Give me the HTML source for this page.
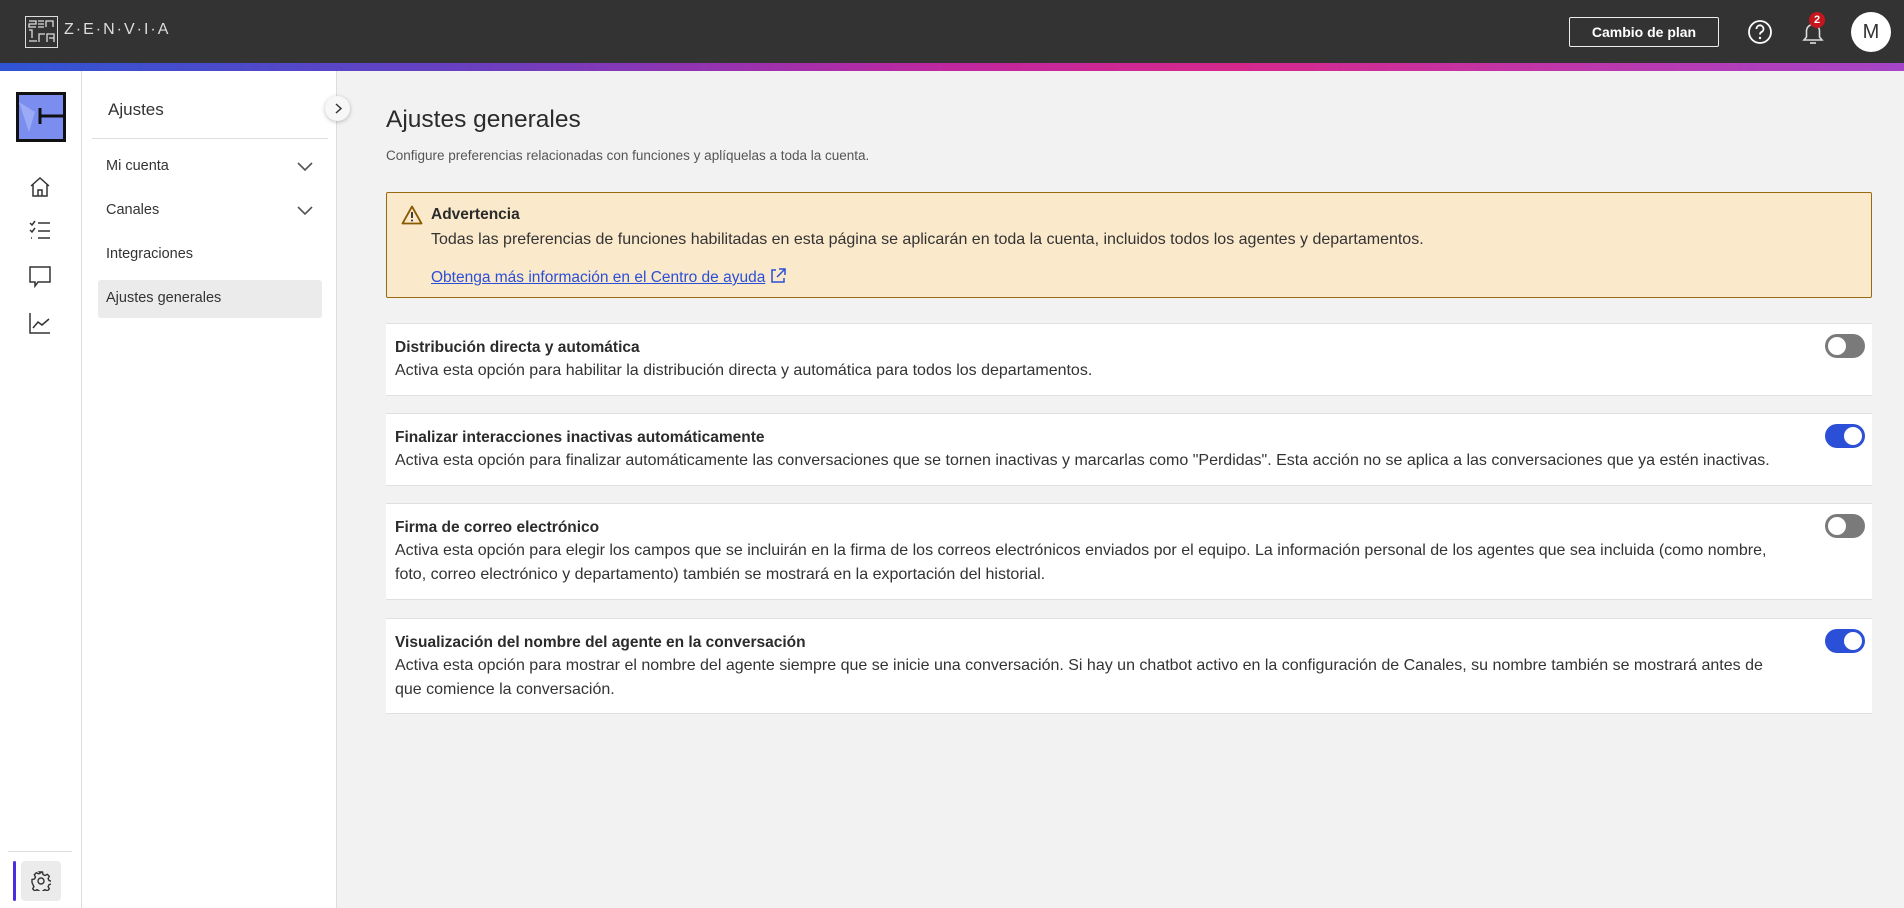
<!DOCTYPE html>
<html><head><meta charset="utf-8"><style>
*{box-sizing:border-box;margin:0;padding:0}
body{width:1904px;height:908px;overflow:hidden;font-family:"Liberation Sans",sans-serif;background:#f2f2f2;position:relative;color:#2b2b2b}
.hdr{position:absolute;left:0;top:0;width:1904px;height:63px;background:#333}
.grad{position:absolute;left:0;top:63px;width:1904px;height:8px;background:linear-gradient(90deg,#2f55d4 0%,#6a3fc0 25%,#c0279f 50%,#d6288c 65%,#a545c8 100%)}
.rail{position:absolute;left:0;top:71px;width:82px;height:837px;background:#fff;border-right:1px solid #ddd}
.panel{position:absolute;left:82px;top:71px;width:255px;height:837px;background:#fff;border-right:1px solid #ddd}
.abs{position:absolute}
.card{position:absolute;left:386px;width:1486px;background:#fff;border-top:1px solid #e0e0e0;border-bottom:1px solid #e0e0e0;padding:13px 0 0 9px}
.card h3{font-size:15.5px;font-weight:bold;line-height:22px;color:#2b2b2b}
.card p{font-size:16px;line-height:24px;color:#333;width:1400px}
.tg{position:absolute;right:7px;top:10px;width:40px;height:24px;border-radius:12px;background:#7a7a7a}
.tg::after{content:"";position:absolute;left:3px;top:3px;width:18px;height:18px;border-radius:50%;background:#fff}
.tg.on{background:#2b4fd6}.tg.on::after{left:19px}
.mi{position:absolute;left:106px;font-size:14.5px;color:#333}
</style></head><body>
<div class="hdr">
 <svg class="abs" style="left:25px;top:16px" width="33" height="32" viewBox="0 0 33 32"><rect x="0.5" y="0.5" width="32" height="31" fill="none" stroke="#ddd"/><path d="M4 5h7v3H4v3h7M13 5h6M13 8h6M13 11h6M21 11V5h7v6M4 14h3v8M4 25h8M14 26v-8h6M22 26v-8h7v8M24 22h5" fill="none" stroke="#ddd" stroke-width="1.3"/></svg>
 <div class="abs" style="left:64px;top:21px;color:#ddd;font-size:16px;letter-spacing:2px">Z·E·N·V·I·A</div>
 <div class="abs" style="left:1569px;top:17px;width:150px;height:30px;border:1px solid #eee;border-radius:2px;color:#fff;font-weight:bold;font-size:14px;text-align:center;line-height:28px">Cambio de plan</div>
 <svg class="abs" style="left:1747px;top:19px" width="26" height="26" viewBox="0 0 26 26"><circle cx="13" cy="13" r="11" fill="none" stroke="#fff" stroke-width="1.8"/><path d="M9.5 10a3.5 3.5 0 1 1 5 3c-1.2.6-1.5 1.3-1.5 2.5" fill="none" stroke="#fff" stroke-width="1.8"/><circle cx="13" cy="19" r="1.2" fill="#fff"/></svg>
 <svg class="abs" style="left:1799px;top:18px" width="28" height="30" viewBox="0 0 28 30"><path d="M5 22h18l-2.5-3v-6a6.5 6.5 0 0 0-13 0v6z" fill="none" stroke="#ddd" stroke-width="1.6"/><path d="M11 25h6" stroke="#ddd" stroke-width="1.6"/></svg>
 <div class="abs" style="left:1809px;top:12px;width:16px;height:16px;border-radius:50%;background:#c4161c;color:#fff;font-size:11px;font-weight:bold;text-align:center;line-height:16px">2</div>
 <div class="abs" style="left:1851px;top:12px;width:40px;height:40px;border-radius:50%;background:#fff;color:#333;font-size:20px;text-align:center;line-height:40px">M</div>
</div>
<div class="grad"></div>
<div class="rail">
 <svg class="abs" style="left:16px;top:21px" width="50" height="50" viewBox="0 0 50 50"><rect x="1.5" y="1.5" width="47" height="47" fill="#7b8ef0" stroke="#111" stroke-width="3"/><path d="M3 10l10 30 6-20z" fill="#aab6f7" opacity=".7"/><path d="M24 24h24M24 16v16" stroke="#111" stroke-width="3"/></svg>
 <svg class="abs" style="left:29px;top:105px" width="22" height="22" viewBox="0 0 22 22" fill="none" stroke="#333" stroke-width="1.5"><path d="M2 10L11 2l9 8M4 8v12h14V8M9 20v-6h4v6"/></svg>
 <svg class="abs" style="left:29px;top:148px" width="22" height="22" viewBox="0 0 22 22" fill="none" stroke="#333" stroke-width="1.5"><path d="M1 4l2 2 3-4M1 11l2 2 3-4M9 4h12M9 12h12M9 19h12M2 19h1"/></svg>
 <svg class="abs" style="left:29px;top:195px" width="22" height="22" viewBox="0 0 22 22" fill="none" stroke="#333" stroke-width="1.5"><path d="M1 1h20v15H9l-3 4v-4H1z"/></svg>
 <svg class="abs" style="left:29px;top:241px" width="22" height="22" viewBox="0 0 22 22" fill="none" stroke="#333" stroke-width="1.5"><path d="M1 1v20h20M4 16l5-6 4 3 7-6"/></svg>
 <div class="abs" style="left:8px;top:780px;width:64px;height:1px;background:#ddd"></div>
 <div class="abs" style="left:13px;top:790px;width:3px;height:40px;background:#4a2ee0;border-radius:2px"></div>
 <div class="abs" style="left:21px;top:790px;width:40px;height:40px;background:#ebebeb;border-radius:4px"></div>
 <svg class="abs" style="left:31px;top:800px" width="20" height="20" viewBox="0 0 20 20" fill="none" stroke="#333" stroke-width="1.4"><path d="M8.5 1h3l.5 2.5 2 1 2.3-1.2 2 2-1.2 2.3 1 2 2.5.5v3l-2.5.5-1 2 1.2 2.3-2 2-2.3-1.2-2 1-.5 2.5h-3l-.5-2.5-2-1-2.3 1.2-2-2 1.2-2.3-1-2L1 11.5v-3l2.5-.5 1-2-1.2-2.3 2-2 2.3 1.2 2-1z"/><circle cx="10" cy="10" r="3"/></svg>
</div>
<div class="panel">
 <div class="abs" style="left:26px;top:29px;font-size:17px;color:#333">Ajustes</div>
 <div class="abs" style="left:10px;top:67px;width:236px;height:1px;background:#ddd"></div>
 <div class="mi" style="left:24px;top:87px">Mi cuenta</div>
 <svg class="abs" style="left:214px;top:90px" width="18" height="12" viewBox="0 0 18 12"><path d="M2 2l7 7 7-7" fill="none" stroke="#555" stroke-width="1.6"/></svg>
 <div class="mi" style="left:24px;top:131px">Canales</div>
 <svg class="abs" style="left:214px;top:134px" width="18" height="12" viewBox="0 0 18 12"><path d="M2 2l7 7 7-7" fill="none" stroke="#555" stroke-width="1.6"/></svg>
 <div class="mi" style="left:24px;top:175px">Integraciones</div>
 <div class="abs" style="left:16px;top:209px;width:224px;height:38px;background:#ebebeb;border-radius:3px"></div>
 <div class="mi" style="left:24px;top:219px">Ajustes generales</div>
</div>
<div class="abs" style="left:325px;top:96px;width:25px;height:25px;border-radius:50%;background:#f7f7f7;box-shadow:0 1px 4px rgba(0,0,0,.25)"></div>
<svg class="abs" style="left:332px;top:102px" width="12" height="13" viewBox="0 0 12 13"><path d="M4 2l5 4.5L4 11" fill="none" stroke="#333" stroke-width="1.5"/></svg>

<div class="abs" style="left:386px;top:106px;font-size:24.5px;color:#2b2b2b">Ajustes generales</div>
<div class="abs" style="left:386px;top:148px;font-size:13.5px;color:#555">Configure preferencias relacionadas con funciones y aplíquelas a toda la cuenta.</div>

<div class="abs" style="left:386px;top:192px;width:1486px;height:106px;background:#fbe9cc;border:1px solid #9a6a10;border-radius:2px"></div>
<svg class="abs" style="left:401px;top:205px" width="22" height="20" viewBox="0 0 22 20"><path d="M11 1.5L20.5 18.5H1.5z" fill="none" stroke="#8a5a00" stroke-width="1.8" stroke-linejoin="round"/><path d="M11 7v6" stroke="#2b2b2b" stroke-width="1.8"/><circle cx="11" cy="15.5" r="1" fill="#2b2b2b"/></svg>
<div class="abs" style="left:431px;top:206px;font-size:15.5px;font-weight:bold;color:#2b2b2b">Advertencia</div>
<div class="abs" style="left:431px;top:231px;font-size:16px;color:#333">Todas las preferencias de funciones habilitadas en esta página se aplicarán en toda la cuenta, incluidos todos los agentes y departamentos.</div>
<div class="abs" style="left:431px;top:268px;font-size:15.5px;color:#2b4fd6;white-space:nowrap"><span style="text-decoration:underline">Obtenga más información en el Centro de ayuda</span> <svg style="vertical-align:-2px" width="16" height="16" viewBox="0 0 16 16" fill="none" stroke="#2b4fd6" stroke-width="1.5"><path d="M6 2H2v12h12v-4M9 1h6v6M15 1L7 9"/></svg></div>

<div class="card" style="top:323px;height:73px"><h3>Distribución directa y automática</h3><p>Activa esta opción para habilitar la distribución directa y automática para todos los departamentos.</p><div class="tg"></div></div>
<div class="card" style="top:413px;height:73px"><h3>Finalizar interacciones inactivas automáticamente</h3><p>Activa esta opción para finalizar automáticamente las conversaciones que se tornen inactivas y marcarlas como "Perdidas". Esta acción no se aplica a las conversaciones que ya estén inactivas.</p><div class="tg on"></div></div>
<div class="card" style="top:503px;height:97px"><h3>Firma de correo electrónico</h3><p>Activa esta opción para elegir los campos que se incluirán en la firma de los correos electrónicos enviados por el equipo. La información personal de los agentes que sea incluida (como nombre,<br>foto, correo electrónico y departamento) también se mostrará en la exportación del historial.</p><div class="tg"></div></div>
<div class="card" style="top:618px;height:96px"><h3>Visualización del nombre del agente en la conversación</h3><p>Activa esta opción para mostrar el nombre del agente siempre que se inicie una conversación. Si hay un chatbot activo en la configuración de Canales, su nombre también se mostrará antes de<br>que comience la conversación.</p><div class="tg on"></div></div>
</body></html>
